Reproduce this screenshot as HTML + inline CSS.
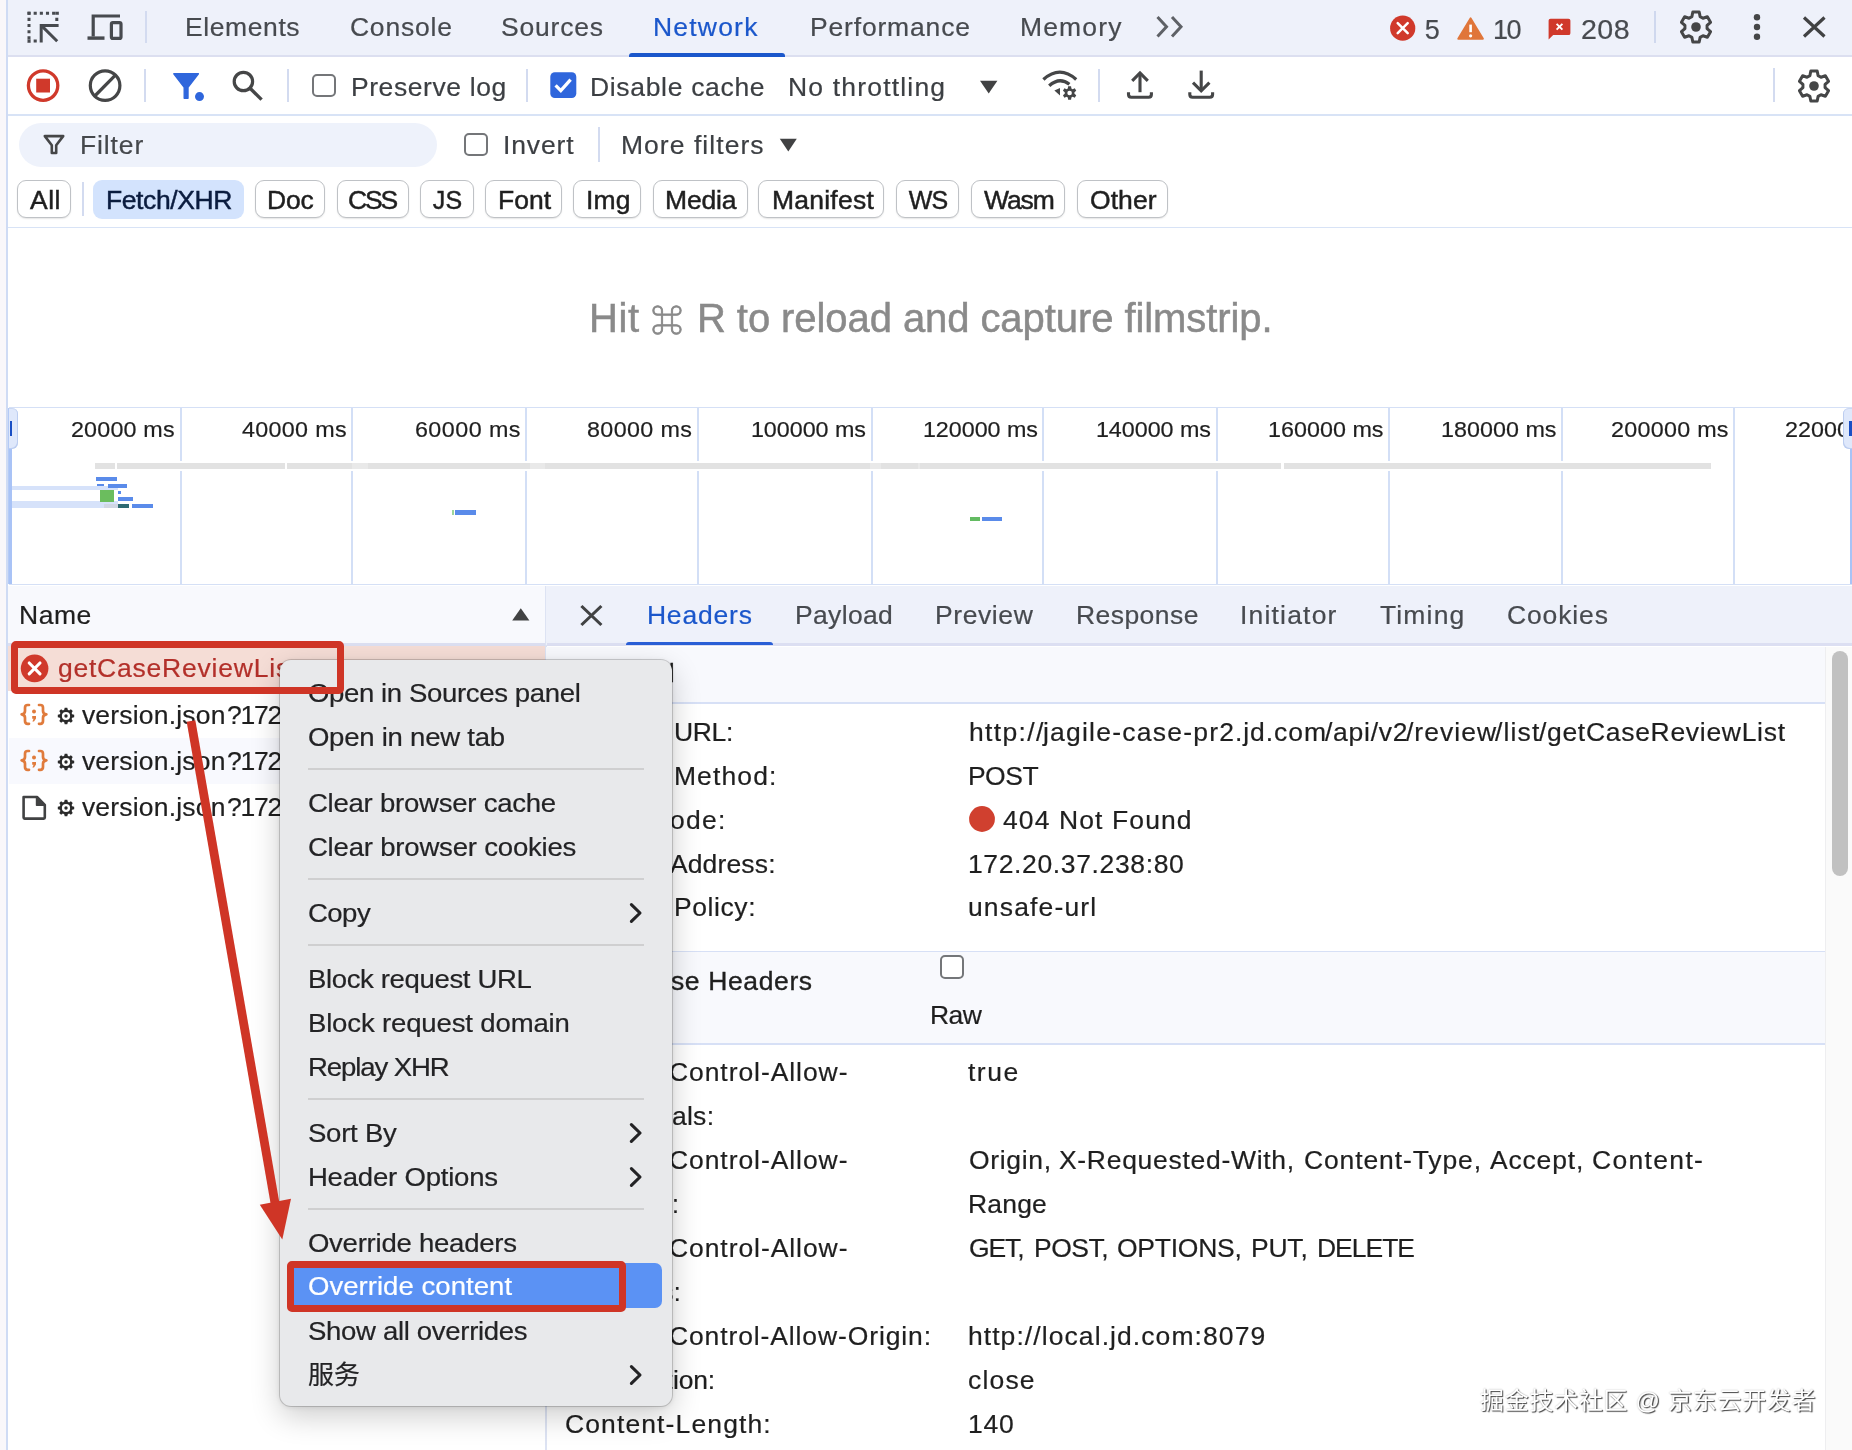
<!DOCTYPE html>
<html lang="en"><head><meta charset="utf-8"><title>DevTools Network - Override content</title>
<style>
html,body{margin:0;padding:0}
body{width:1852px;height:1450px;position:relative;overflow:hidden;background:#fff;font-family:"Liberation Sans","Noto Sans CJK SC",sans-serif;}
.a{position:absolute}
.t{position:absolute;white-space:nowrap;line-height:1;}
.L{position:absolute;left:0;top:0;width:1852px;height:1450px;will-change:transform;}
#menu{position:absolute;left:280px;top:660px;width:392px;height:745.6px;background:#e8e9eb;border-radius:11px;box-shadow:0 0 0 1px rgba(0,0,0,0.17),0 10px 30px rgba(0,0,0,0.2),0 1px 6px rgba(0,0,0,0.1);}
</style></head><body>
<div class="a" style="left:0px;top:0px;width:6.20px;height:1450.00px;background:#f9f7fa;"></div>
<div class="a" style="left:6.2px;top:0px;width:1.70px;height:1450.00px;background:#cfdbf4;"></div>
<div class="a" style="left:7.9px;top:0px;width:1844.10px;height:55.50px;background:#eef1fa;"></div>
<div class="a" style="left:7.9px;top:54.9px;width:1844.10px;height:2.10px;background:#dcdff0;"></div>
<div class="a" style="left:7.9px;top:114px;width:1844.10px;height:2.00px;background:#d8e3f6;"></div>
<div class="a" style="left:7.9px;top:226.6px;width:1844.10px;height:1.90px;background:#d8e3f6;"></div>
<svg class="a" style="left:26px;top:10px;" width="34" height="34" viewBox="0 0 34 34"><g fill="none" stroke="#474a4f" stroke-width="3">
<path d="M3 1.7 V33" stroke-dasharray="3.1 3.05"/><path d="M1.5 3.2 H33" stroke-dasharray="3.1 3.05"/>
<path d="M30.8 1.7 V12" stroke-dasharray="3.1 3.05"/><path d="M1.5 30.9 H12" stroke-dasharray="3.1 3.05"/>
<path d="M32.6 15.4 H15.2 V32.6" stroke-linejoin="miter"/><path d="M15.2 15.4 L31.2 31.2"/></g></svg>
<svg class="a" style="left:86px;top:12px;" width="38" height="30" viewBox="0 0 38 30"><g fill="none" stroke="#474a4f" stroke-width="3.2">
<path d="M7.2 24.5 V4 H34"/><rect x="25.4" y="10.6" width="9.6" height="15.8" rx="1.5"/></g>
<rect x="1.5" y="24.4" width="17" height="3.4" fill="#474a4f"/></svg>
<div class="a" style="left:145px;top:11px;width:2.00px;height:32.00px;background:#d3dbf0;"></div>
<div class="a" style="left:629px;top:53.4px;width:155.60px;height:3.60px;background:#1b57cb;border-radius:3px 3px 0 0;"></div>
<svg class="a" style="left:1154px;top:14px;" width="32" height="26" viewBox="0 0 32 26"><g fill="none" stroke="#5e6166" stroke-width="3" stroke-linejoin="miter"><path d="M3.5 3 L12.5 12.8 L3.5 22.6"/><path d="M18 3 L27 12.8 L18 22.6"/></g></svg>
<svg class="a" style="left:1389px;top:14px;" width="28" height="28" viewBox="0 0 28 28"><circle cx="13.7" cy="14.2" r="12.6" fill="#d0392b"/><path d="M8.7 9.2 L18.7 19.2 M18.7 9.2 L8.7 19.2" stroke="#fff" stroke-width="2.5" stroke-linecap="round"/></svg>
<svg class="a" style="left:1455px;top:14px;" width="32" height="28" viewBox="0 0 32 28"><path d="M15.6 4.2 L28 24.8 H3.2 Z" fill="#e0763a" stroke="#e0763a" stroke-width="1.8" stroke-linejoin="round"/><path d="M15.6 10.6 V18.2" stroke="#fff" stroke-width="2.6"/><circle cx="15.6" cy="21.8" r="1.6" fill="#fff"/></svg>
<svg class="a" style="left:1547px;top:17px;" width="26" height="25" viewBox="0 0 26 25"><path d="M3 1.7 H21.5 Q23.4 1.7 23.4 3.6 V16.2 Q23.4 18.1 21.5 18.1 H6.2 L1.6 22.6 V3.6 Q1.6 1.7 3.5 1.7 Z" fill="#d0392b"/><path d="M9.6 6.8 L15.4 12.6 M15.4 6.8 L9.6 12.6" stroke="#fff" stroke-width="1.9"/></svg>
<div class="a" style="left:1654px;top:10.5px;width:1.60px;height:32.50px;background:#cfd8ee;"></div>
<svg class="a" style="left:1679px;top:9.7px;" width="34" height="34" viewBox="0 0 34 34"><path d="M21.12 6.59 L20.18 2.03 L13.82 2.03 L12.88 6.59 L10.04 8.22 L5.63 6.76 L2.45 12.27 L5.92 15.36 L5.92 18.64 L2.45 21.73 L5.63 27.24 L10.04 25.78 L12.88 27.41 L13.82 31.97 L20.18 31.97 L21.12 27.41 L23.96 25.78 L28.37 27.24 L31.55 21.73 L28.08 18.64 L28.08 15.36 L31.55 12.27 L28.37 6.76 L23.96 8.22 Z" fill="none" stroke="#454647" stroke-width="3" stroke-linejoin="round"/><circle cx="17" cy="17" r="4.8" fill="#454647"/></svg>
<svg class="a" style="left:1750px;top:12px;" width="14" height="30" viewBox="0 0 14 30"><circle cx="7" cy="5.2" r="3.2" fill="#454647"/><circle cx="7" cy="15" r="3.2" fill="#454647"/><circle cx="7" cy="24.8" r="3.2" fill="#454647"/></svg>
<svg class="a" style="left:1800px;top:14px;" width="28" height="26" viewBox="0 0 28 26"><path d="M4 3.5 L24.5 22.5 M24.5 3.5 L4 22.5" stroke="#414243" stroke-width="3.2"/></svg>
<svg class="a" style="left:25px;top:68px;" width="36" height="36" viewBox="0 0 36 36"><circle cx="18.1" cy="17.6" r="14.7" fill="none" stroke="#d0392b" stroke-width="3.3"/><rect x="11.2" y="10.7" width="13.8" height="13.8" fill="#d0392b"/></svg>
<svg class="a" style="left:87px;top:68px;" width="36" height="36" viewBox="0 0 36 36"><circle cx="18.1" cy="17.6" r="14.8" fill="none" stroke="#454647" stroke-width="3.2"/><path d="M7.8 28 L28.4 7.2" stroke="#454647" stroke-width="3.2"/></svg>
<div class="a" style="left:144.4px;top:69px;width:1.80px;height:33.00px;background:#d3dbf0;"></div>
<svg class="a" style="left:170px;top:70px;" width="36" height="34" viewBox="0 0 36 34"><path d="M3.8 3.8 H28.4 L18 17.4 V28.3 H14.2 V17.4 Z" fill="#2f66dc" stroke="#2f66dc" stroke-width="1.4" stroke-linejoin="round"/><circle cx="29.5" cy="26.6" r="4.5" fill="#2f66dc"/></svg>
<svg class="a" style="left:230px;top:70px;" width="36" height="34" viewBox="0 0 36 34"><circle cx="13.4" cy="11.5" r="9.2" fill="none" stroke="#454647" stroke-width="3.2"/><path d="M19.8 18 L31.6 29.6" stroke="#454647" stroke-width="3.4"/></svg>
<div class="a" style="left:287.2px;top:69px;width:1.80px;height:33.00px;background:#d3dbf0;"></div>
<div class="a" style="left:312px;top:73.8px;width:20.0px;height:19.4px;border:2px solid #747679;border-radius:5px;background:#fff"></div>
<div class="a" style="left:526.2px;top:69px;width:1.80px;height:33.00px;background:#d3dbf0;"></div>
<svg class="a" style="left:550px;top:72px;" width="27" height="27" viewBox="0 0 27 27"><rect x="0.3" y="0.3" width="26" height="25.8" rx="4.5" fill="#2f66dc"/><path d="M5.6 13.4 L10.8 18.6 L20.6 7.6" fill="none" stroke="#fff" stroke-width="3.3"/></svg>
<svg class="a" style="left:979px;top:80px;" width="20" height="15" viewBox="0 0 20 15"><path d="M1 0.7 H18.4 L9.7 13.6 Z" fill="#414243"/></svg>
<svg class="a" style="left:1039px;top:68px;" width="42" height="34" viewBox="0 0 42 34"><g fill="none" stroke="#454647" stroke-width="3.3">
<path d="M4.4 11.4 Q20.8 -3.2 37.2 11.4"/><path d="M10.2 17.8 Q20.4 8.6 30.4 16.2"/></g>
<path d="M15.4 22.4 L21 20 L21 27.6 Z" fill="#454647"/>
<path d="M32.40 20.44 L32.06 18.15 L29.14 18.15 L28.80 20.44 L27.56 21.16 L25.40 20.32 L23.94 22.84 L25.75 24.28 L25.75 25.72 L23.94 27.16 L25.40 29.68 L27.56 28.84 L28.80 29.56 L29.14 31.85 L32.06 31.85 L32.40 29.56 L33.64 28.84 L35.80 29.68 L37.26 27.16 L35.45 25.72 L35.45 24.28 L37.26 22.84 L35.80 20.32 L33.64 21.16 Z" fill="#454647"/><circle cx="30.6" cy="25" r="2.3" fill="#fff"/></svg>
<div class="a" style="left:1098.2px;top:69px;width:1.80px;height:33.00px;background:#d3dbf0;"></div>
<svg class="a" style="left:1124px;top:69px;" width="32" height="32" viewBox="0 0 32 32"><g fill="none" stroke="#454647" stroke-width="3.1"><path d="M16 23.2 V4.4"/><path d="M8.2 11.8 L16 4 L23.8 11.8"/><path d="M4.5 23.2 V25.6 Q4.5 28.3 7.2 28.3 H24.7 Q27.4 28.3 27.4 25.6 V23.2"/></g></svg>
<svg class="a" style="left:1185px;top:69px;" width="32" height="32" viewBox="0 0 32 32"><g fill="none" stroke="#454647" stroke-width="3.1"><path d="M16.2 1.6 V21.4"/><path d="M8 13.6 L16.2 21.8 L24.4 13.6"/><path d="M4.8 23.2 V25.6 Q4.8 28.3 7.5 28.3 H24.9 Q27.6 28.3 27.6 25.6 V23.2"/></g></svg>
<div class="a" style="left:1773.2px;top:68px;width:1.80px;height:34.00px;background:#d3dbf0;"></div>
<svg class="a" style="left:1797px;top:69px;" width="34" height="34" viewBox="0 0 34 34"><path d="M21.12 6.59 L20.18 2.03 L13.82 2.03 L12.88 6.59 L10.04 8.22 L5.63 6.76 L2.45 12.27 L5.92 15.36 L5.92 18.64 L2.45 21.73 L5.63 27.24 L10.04 25.78 L12.88 27.41 L13.82 31.97 L20.18 31.97 L21.12 27.41 L23.96 25.78 L28.37 27.24 L31.55 21.73 L28.08 18.64 L28.08 15.36 L31.55 12.27 L28.37 6.76 L23.96 8.22 Z" fill="none" stroke="#454647" stroke-width="3" stroke-linejoin="round"/><circle cx="17" cy="17" r="4.8" fill="#454647"/></svg>
<div class="a" style="left:18.8px;top:123px;width:418.00px;height:43.80px;background:#eef2fb;border-radius:22px;"></div>
<svg class="a" style="left:42px;top:133px;" width="24" height="23" viewBox="0 0 24 23"><path d="M2.8 3.1 H21.2 L14.2 12.2 V20 H9.8 V12.2 Z" fill="none" stroke="#454647" stroke-width="2.6" stroke-linejoin="round"/></svg>
<div class="a" style="left:464px;top:132.5px;width:20.2px;height:19.5px;border:2px solid #747679;border-radius:5px;background:#fff"></div>
<div class="a" style="left:598.2px;top:127px;width:1.80px;height:35.00px;background:#d3dbf0;"></div>
<svg class="a" style="left:779px;top:138px;" width="20" height="15" viewBox="0 0 20 15"><path d="M0.8 0.8 H17.8 L9.3 13.6 Z" fill="#414243"/></svg>
<div class="a" style="left:17.2px;top:179.7px;width:51.7px;height:36.6px;border:1.5px solid #bfc2c6;border-radius:9px;background:#fff;box-shadow:0 1px 1.5px rgba(0,0,0,0.10)"></div>
<div class="a" style="left:255px;top:179.7px;width:67.6px;height:36.6px;border:1.5px solid #bfc2c6;border-radius:9px;background:#fff;box-shadow:0 1px 1.5px rgba(0,0,0,0.10)"></div>
<div class="a" style="left:337px;top:179.7px;width:69.8px;height:36.6px;border:1.5px solid #bfc2c6;border-radius:9px;background:#fff;box-shadow:0 1px 1.5px rgba(0,0,0,0.10)"></div>
<div class="a" style="left:420px;top:179.7px;width:51.6px;height:36.6px;border:1.5px solid #bfc2c6;border-radius:9px;background:#fff;box-shadow:0 1px 1.5px rgba(0,0,0,0.10)"></div>
<div class="a" style="left:485.3px;top:179.7px;width:74.7px;height:36.6px;border:1.5px solid #bfc2c6;border-radius:9px;background:#fff;box-shadow:0 1px 1.5px rgba(0,0,0,0.10)"></div>
<div class="a" style="left:573.4px;top:179.7px;width:65.3px;height:36.6px;border:1.5px solid #bfc2c6;border-radius:9px;background:#fff;box-shadow:0 1px 1.5px rgba(0,0,0,0.10)"></div>
<div class="a" style="left:652.7px;top:179.7px;width:93.5px;height:36.6px;border:1.5px solid #bfc2c6;border-radius:9px;background:#fff;box-shadow:0 1px 1.5px rgba(0,0,0,0.10)"></div>
<div class="a" style="left:758.2px;top:179.7px;width:124.2px;height:36.6px;border:1.5px solid #bfc2c6;border-radius:9px;background:#fff;box-shadow:0 1px 1.5px rgba(0,0,0,0.10)"></div>
<div class="a" style="left:895.8px;top:179.7px;width:61.2px;height:36.6px;border:1.5px solid #bfc2c6;border-radius:9px;background:#fff;box-shadow:0 1px 1.5px rgba(0,0,0,0.10)"></div>
<div class="a" style="left:970.8px;top:179.7px;width:92.7px;height:36.6px;border:1.5px solid #bfc2c6;border-radius:9px;background:#fff;box-shadow:0 1px 1.5px rgba(0,0,0,0.10)"></div>
<div class="a" style="left:1077.2px;top:179.7px;width:88.4px;height:36.6px;border:1.5px solid #bfc2c6;border-radius:9px;background:#fff;box-shadow:0 1px 1.5px rgba(0,0,0,0.10)"></div>
<div class="a" style="left:82.2px;top:182px;width:1.80px;height:34.00px;background:#d3dbf0;"></div>
<div class="a" style="left:93.3px;top:179.7px;width:150.70px;height:39.60px;background:#d3e3fd;border-radius:9px;"></div>
<div class="a" style="left:8.5px;top:406.5px;width:1843.50px;height:1.70px;background:#d5e0f6;"></div>
<div class="a" style="left:8.5px;top:583.8px;width:1843.50px;height:1.70px;background:#d5e0f6;"></div>
<div class="a" style="left:180px;top:408px;width:2.00px;height:176.00px;background:#d3dff6;"></div>
<div class="a" style="left:351.2px;top:408px;width:2.00px;height:176.00px;background:#d3dff6;"></div>
<div class="a" style="left:525px;top:408px;width:2.00px;height:176.00px;background:#d3dff6;"></div>
<div class="a" style="left:697.2px;top:408px;width:2.00px;height:176.00px;background:#d3dff6;"></div>
<div class="a" style="left:870.5px;top:408px;width:2.00px;height:176.00px;background:#d3dff6;"></div>
<div class="a" style="left:1042.2px;top:408px;width:2.00px;height:176.00px;background:#d3dff6;"></div>
<div class="a" style="left:1215.5px;top:408px;width:2.00px;height:176.00px;background:#d3dff6;"></div>
<div class="a" style="left:1388.2px;top:408px;width:2.00px;height:176.00px;background:#d3dff6;"></div>
<div class="a" style="left:1561.2px;top:408px;width:2.00px;height:176.00px;background:#d3dff6;"></div>
<div class="a" style="left:1733px;top:408px;width:2.00px;height:176.00px;background:#d3dff6;"></div>
<div class="a" style="left:90px;top:461.3px;width:1626.00px;height:10.00px;background:#fff;"></div>
<div class="a" style="left:94.6px;top:463.4px;width:20.60px;height:5.20px;background:#e2e2e2;"></div>
<div class="a" style="left:116.6px;top:463.4px;width:168.00px;height:5.20px;background:#e2e2e2;"></div>
<div class="a" style="left:286.6px;top:463.4px;width:994.40px;height:5.20px;background:#e2e2e2;"></div>
<div class="a" style="left:1283.5px;top:463.4px;width:427.50px;height:5.20px;background:#e2e2e2;"></div>
<div class="a" style="left:352px;top:463.4px;width:15.50px;height:5.20px;background:#e9e9e9;"></div>
<div class="a" style="left:530px;top:463.4px;width:15.00px;height:5.20px;background:#e9e9e9;"></div>
<div class="a" style="left:870px;top:463.4px;width:11.00px;height:5.20px;background:#e9e9e9;"></div>
<div class="a" style="left:918px;top:463.4px;width:2.00px;height:5.20px;background:#e9e9e9;"></div>
<div class="a" style="left:12px;top:486px;width:105.70px;height:4.30px;background:#d6e2fa;"></div>
<div class="a" style="left:12px;top:501px;width:105.70px;height:7.00px;background:#d6e2fa;"></div>
<div class="a" style="left:96px;top:477px;width:20.60px;height:3.60px;background:#5a8bea;"></div>
<div class="a" style="left:97px;top:483.8px;width:7.00px;height:1.90px;background:#5a8bea;"></div>
<div class="a" style="left:107.6px;top:483.8px;width:19.80px;height:4.20px;background:#5a8bea;"></div>
<div class="a" style="left:100px;top:490px;width:14.00px;height:11.50px;background:#6bbd5e;"></div>
<div class="a" style="left:118px;top:491px;width:3.40px;height:3.40px;background:#5a8bea;"></div>
<div class="a" style="left:118px;top:497px;width:14.80px;height:3.90px;background:#5a8bea;"></div>
<div class="a" style="left:104px;top:504px;width:14.00px;height:3.60px;background:#d0d6e4;"></div>
<div class="a" style="left:118px;top:504px;width:11.00px;height:3.60px;background:#2e6b73;"></div>
<div class="a" style="left:132px;top:504px;width:20.70px;height:3.60px;background:#5a8bea;"></div>
<div class="a" style="left:451.5px;top:510px;width:2.00px;height:4.50px;background:#9fd69a;"></div>
<div class="a" style="left:454.5px;top:510px;width:21.00px;height:4.50px;background:#5a8bea;"></div>
<div class="a" style="left:969.5px;top:516.5px;width:10.00px;height:4.50px;background:#63bb62;"></div>
<div class="a" style="left:981.5px;top:516.5px;width:20.00px;height:4.50px;background:#5a8bea;"></div>
<div class="a" style="left:7.9px;top:408px;width:4.10px;height:176.00px;background:#b4caf6;"></div>
<div class="a" style="left:9.4px;top:408px;width:2.60px;height:176.00px;background:#a9c3f6;"></div>
<div class="a" style="left:8.5px;top:408px;width:9.90px;height:41.00px;background:#dfe8fb;border-radius:0 6px 6px 0;box-shadow:inset -1px -1px 0 #bccdf0, inset 0 1px 0 #cbd8f3;"></div>
<div class="a" style="left:10.2px;top:421px;width:2.00px;height:15.40px;background:#1a4fc4;"></div>
<div class="a" style="left:1850px;top:408px;width:2.00px;height:176.00px;background:#a9c3f6;"></div>
<div class="a" style="left:7.9px;top:585.5px;width:537.10px;height:57.50px;background:#f8f9fd;"></div>
<div class="a" style="left:7.9px;top:643px;width:537.10px;height:2.80px;background:#dcdff1;"></div>
<svg class="a" style="left:511px;top:607px;" width="20" height="15" viewBox="0 0 20 15"><path d="M1.2 13.6 H18.4 L9.8 1.2 Z" fill="#414243"/></svg>
<div class="a" style="left:7.9px;top:645.8px;width:537.10px;height:45.20px;background:#f5ddd6;"></div>
<div class="a" style="left:8.5px;top:737.5px;width:536.00px;height:46.00px;background:#f8f9fe;"></div>
<svg class="a" style="left:20px;top:654px;" width="30" height="30" viewBox="0 0 30 30"><circle cx="14.6" cy="14.4" r="13.8" fill="#d0392b"/><path d="M9.2 9 L20 19.8 M20 9 L9.2 19.8" stroke="#fff" stroke-width="3.1" stroke-linecap="round"/></svg>
<svg class="a" style="left:19px;top:703px;" width="30" height="24" viewBox="0 0 30 24"><g fill="none" stroke="#e07b3c" stroke-width="2.7" stroke-linejoin="round" stroke-linecap="round">
<path d="M10 2 H8.6 Q6 2 6 4.8 V8 Q6 11 2.6 11.4 Q6 11.8 6 14.8 V18 Q6 20.8 8.6 20.8 H10"/>
<path d="M20 2 H21.4 Q24 2 24 4.8 V8 Q24 11 27.4 11.4 Q24 11.8 24 14.8 V18 Q24 20.8 21.4 20.8 H20"/></g>
<circle cx="15" cy="8.4" r="2" fill="#e07b3c"/><path d="M13.2 13 H17 V15.6 L15 18.6 H13.4 L14.6 15.8 H13.2 Z" fill="#e07b3c"/></svg>
<svg class="a" style="left:57px;top:707.2px;" width="18" height="18" viewBox="0 0 18 18"><path d="M10.79 2.85 L10.30 0.80 L7.70 0.80 L7.21 2.85 L5.92 3.39 L4.12 2.29 L2.29 4.12 L3.39 5.92 L2.85 7.21 L0.80 7.70 L0.80 10.30 L2.85 10.79 L3.39 12.08 L2.29 13.88 L4.12 15.71 L5.92 14.61 L7.21 15.15 L7.70 17.20 L10.30 17.20 L10.79 15.15 L12.08 14.61 L13.88 15.71 L15.71 13.88 L14.61 12.08 L15.15 10.79 L17.20 10.30 L17.20 7.70 L15.15 7.21 L14.61 5.92 L15.71 4.12 L13.88 2.29 L12.08 3.39 Z" fill="#2a2a2a"/><circle cx="9" cy="9" r="4.1" fill="#fff"/><circle cx="9" cy="9" r="1.7" fill="#2a2a2a"/></svg>
<svg class="a" style="left:19px;top:749px;" width="30" height="24" viewBox="0 0 30 24"><g fill="none" stroke="#e07b3c" stroke-width="2.7" stroke-linejoin="round" stroke-linecap="round">
<path d="M10 2 H8.6 Q6 2 6 4.8 V8 Q6 11 2.6 11.4 Q6 11.8 6 14.8 V18 Q6 20.8 8.6 20.8 H10"/>
<path d="M20 2 H21.4 Q24 2 24 4.8 V8 Q24 11 27.4 11.4 Q24 11.8 24 14.8 V18 Q24 20.8 21.4 20.8 H20"/></g>
<circle cx="15" cy="8.4" r="2" fill="#e07b3c"/><path d="M13.2 13 H17 V15.6 L15 18.6 H13.4 L14.6 15.8 H13.2 Z" fill="#e07b3c"/></svg>
<svg class="a" style="left:57px;top:753.2px;" width="18" height="18" viewBox="0 0 18 18"><path d="M10.79 2.85 L10.30 0.80 L7.70 0.80 L7.21 2.85 L5.92 3.39 L4.12 2.29 L2.29 4.12 L3.39 5.92 L2.85 7.21 L0.80 7.70 L0.80 10.30 L2.85 10.79 L3.39 12.08 L2.29 13.88 L4.12 15.71 L5.92 14.61 L7.21 15.15 L7.70 17.20 L10.30 17.20 L10.79 15.15 L12.08 14.61 L13.88 15.71 L15.71 13.88 L14.61 12.08 L15.15 10.79 L17.20 10.30 L17.20 7.70 L15.15 7.21 L14.61 5.92 L15.71 4.12 L13.88 2.29 L12.08 3.39 Z" fill="#2a2a2a"/><circle cx="9" cy="9" r="4.1" fill="#fff"/><circle cx="9" cy="9" r="1.7" fill="#2a2a2a"/></svg>
<svg class="a" style="left:20px;top:794px;" width="30" height="28" viewBox="0 0 30 28"><path d="M3.6 3 H17 L24.8 10.8 V23.6 Q24.8 24.6 23.8 24.6 H4.6 Q3.6 24.6 3.6 23.6 Z" fill="none" stroke="#414243" stroke-width="2.6" stroke-linejoin="round"/><path d="M16.6 3.2 V11.2 H24.6 Z" fill="#414243" stroke="#414243" stroke-width="1.6" stroke-linejoin="round"/></svg>
<svg class="a" style="left:57px;top:799.2px;" width="18" height="18" viewBox="0 0 18 18"><path d="M10.79 2.85 L10.30 0.80 L7.70 0.80 L7.21 2.85 L5.92 3.39 L4.12 2.29 L2.29 4.12 L3.39 5.92 L2.85 7.21 L0.80 7.70 L0.80 10.30 L2.85 10.79 L3.39 12.08 L2.29 13.88 L4.12 15.71 L5.92 14.61 L7.21 15.15 L7.70 17.20 L10.30 17.20 L10.79 15.15 L12.08 14.61 L13.88 15.71 L15.71 13.88 L14.61 12.08 L15.15 10.79 L17.20 10.30 L17.20 7.70 L15.15 7.21 L14.61 5.92 L15.71 4.12 L13.88 2.29 L12.08 3.39 Z" fill="#2a2a2a"/><circle cx="9" cy="9" r="4.1" fill="#fff"/><circle cx="9" cy="9" r="1.7" fill="#2a2a2a"/></svg>
<div class="a" style="left:545px;top:585.5px;width:1.80px;height:864.50px;background:#dde3f3;"></div>
<div class="a" style="left:546.4px;top:585.5px;width:1305.60px;height:59.50px;background:#eef1fa;"></div>
<div class="a" style="left:546.8px;top:643.2px;width:1305.20px;height:2.80px;background:#dcdff2;"></div>
<svg class="a" style="left:578px;top:603px;" width="28" height="26" viewBox="0 0 28 26"><path d="M3.4 3 L23.4 22 M23.4 3 L3.4 22" stroke="#414243" stroke-width="3.1"/></svg>
<div class="a" style="left:626.2px;top:642px;width:146.80px;height:3.40px;background:#2a5fd6;border-radius:3px 3px 0 0;"></div>
<div class="a" style="left:546.4px;top:646.6px;width:1278.60px;height:55.40px;background:#f8f9fd;"></div>
<div class="a" style="left:546.4px;top:702px;width:1278.60px;height:1.50px;background:#d7e0f6;"></div>
<div class="a" style="left:546.4px;top:950.6px;width:1278.60px;height:1.50px;background:#d7e0f6;"></div>
<div class="a" style="left:546.4px;top:952.1px;width:1278.60px;height:90.90px;background:#f8f9fd;"></div>
<div class="a" style="left:546.4px;top:1043px;width:1278.60px;height:1.50px;background:#d7e0f6;"></div>
<div class="a" style="left:1825px;top:646.6px;width:27.00px;height:803.40px;background:#fafafa;"></div>
<div class="a" style="left:1824.6px;top:646.6px;width:1.40px;height:803.40px;background:#eeeef0;"></div>
<div class="a" style="left:1831.7px;top:651px;width:16.30px;height:225.00px;background:#c1c1c1;border-radius:8.2px;"></div>
<svg class="a" style="left:968px;top:805px;" width="28" height="28" viewBox="0 0 28 28"><circle cx="14" cy="14" r="12.9" fill="#d0402f"/></svg>
<div class="a" style="left:940.2px;top:955.4px;width:19.6px;height:19.4px;border:2px solid #747679;border-radius:5px;background:#fff"></div>
<div class="L"><span class="t" style="left:184.55px;top:15px;font-size:25px;letter-spacing:0.568px;color:#474a4f;-webkit-text-stroke:0.2px #474a4f;transform:scaleX(1.06);transform-origin:1.25px 0;">Elements</span>
<span class="t" style="left:349.55px;top:15px;font-size:25px;letter-spacing:0.762px;color:#474a4f;-webkit-text-stroke:0.2px #474a4f;transform:scaleX(1.06);transform-origin:1.25px 0;">Console</span>
<span class="t" style="left:501.15px;top:15px;font-size:25px;letter-spacing:0.765px;color:#474a4f;-webkit-text-stroke:0.2px #474a4f;transform:scaleX(1.06);transform-origin:1.25px 0;">Sources</span>
<span class="t" style="left:809.55px;top:15px;font-size:25px;letter-spacing:0.790px;color:#474a4f;-webkit-text-stroke:0.2px #474a4f;transform:scaleX(1.06);transform-origin:1.25px 0;">Performance</span>
<span class="t" style="left:1020.45px;top:15px;font-size:25px;letter-spacing:1.089px;color:#474a4f;-webkit-text-stroke:0.2px #474a4f;transform:scaleX(1.06);transform-origin:1.25px 0;">Memory</span>
<span class="t" style="left:653.15px;top:15px;font-size:25px;letter-spacing:1.147px;color:#1b57cb;-webkit-text-stroke:0.2px #1b57cb;transform:scaleX(1.06);transform-origin:1.25px 0;">Network</span>
<span class="t" style="left:1424.65px;top:17px;font-size:27px;letter-spacing:1.199px;color:#474a4f;-webkit-text-stroke:0.2px #474a4f;">5</span>
<span class="t" style="left:1493.05px;top:17px;font-size:27px;letter-spacing:-1.617px;color:#474a4f;-webkit-text-stroke:0.2px #474a4f;">10</span>
<span class="t" style="left:1580.65px;top:17px;font-size:27px;letter-spacing:0.476px;color:#474a4f;-webkit-text-stroke:0.2px #474a4f;transform:scaleX(1.06);transform-origin:1.35px 0;">208</span>
<span class="t" style="left:351.15px;top:75px;font-size:25px;letter-spacing:0.558px;color:#3c3f43;-webkit-text-stroke:0.2px #3c3f43;transform:scaleX(1.06);transform-origin:1.25px 0;">Preserve log</span>
<span class="t" style="left:589.85px;top:75px;font-size:25px;letter-spacing:0.647px;color:#3c3f43;-webkit-text-stroke:0.2px #3c3f43;transform:scaleX(1.06);transform-origin:1.25px 0;">Disable cache</span>
<span class="t" style="left:787.75px;top:75px;font-size:25px;letter-spacing:1.124px;color:#3c3f43;-webkit-text-stroke:0.2px #3c3f43;transform:scaleX(1.06);transform-origin:1.25px 0;">No throttling</span>
<span class="t" style="left:80.35px;top:133px;font-size:25px;letter-spacing:0.828px;color:#45484c;-webkit-text-stroke:0.2px #45484c;transform:scaleX(1.06);transform-origin:1.25px 0;">Filter</span>
<span class="t" style="left:503.15px;top:133px;font-size:25px;letter-spacing:0.831px;color:#3c3f43;-webkit-text-stroke:0.2px #3c3f43;transform:scaleX(1.06);transform-origin:1.25px 0;">Invert</span>
<span class="t" style="left:621.05px;top:133px;font-size:25px;letter-spacing:0.997px;color:#3c3f43;-webkit-text-stroke:0.2px #3c3f43;transform:scaleX(1.06);transform-origin:1.25px 0;">More filters</span>
<span class="t" style="left:29.55px;top:188px;font-size:25px;letter-spacing:0.528px;color:#1f1f1f;-webkit-text-stroke:0.45px #1f1f1f;transform:scaleX(1.06);transform-origin:1.25px 0;">All</span>
<span class="t" style="left:266.95px;top:188px;font-size:25px;letter-spacing:-0.166px;color:#1f1f1f;-webkit-text-stroke:0.45px #1f1f1f;transform:scaleX(1.06);transform-origin:1.25px 0;">Doc</span>
<span class="t" style="left:347.95px;top:188px;font-size:25px;letter-spacing:-2.031px;color:#1f1f1f;-webkit-text-stroke:0.45px #1f1f1f;transform:scaleX(1.06);transform-origin:1.25px 0;">CSS</span>
<span class="t" style="left:432.75px;top:188px;font-size:25px;letter-spacing:0.363px;color:#1f1f1f;-webkit-text-stroke:0.45px #1f1f1f;">JS</span>
<span class="t" style="left:497.65px;top:188px;font-size:25px;letter-spacing:0.048px;color:#1f1f1f;-webkit-text-stroke:0.45px #1f1f1f;transform:scaleX(1.06);transform-origin:1.25px 0;">Font</span>
<span class="t" style="left:585.55px;top:188px;font-size:25px;letter-spacing:0.187px;color:#1f1f1f;-webkit-text-stroke:0.45px #1f1f1f;transform:scaleX(1.06);transform-origin:1.25px 0;">Img</span>
<span class="t" style="left:664.85px;top:188px;font-size:25px;letter-spacing:-0.117px;color:#1f1f1f;-webkit-text-stroke:0.45px #1f1f1f;transform:scaleX(1.06);transform-origin:1.25px 0;">Media</span>
<span class="t" style="left:771.65px;top:188px;font-size:25px;letter-spacing:0.233px;color:#1f1f1f;-webkit-text-stroke:0.45px #1f1f1f;transform:scaleX(1.06);transform-origin:1.25px 0;">Manifest</span>
<span class="t" style="left:908.65px;top:188px;font-size:25px;letter-spacing:-0.631px;color:#1f1f1f;-webkit-text-stroke:0.45px #1f1f1f;">WS</span>
<span class="t" style="left:983.95px;top:188px;font-size:25px;letter-spacing:-0.980px;color:#1f1f1f;-webkit-text-stroke:0.45px #1f1f1f;transform:scaleX(1.06);transform-origin:1.25px 0;">Wasm</span>
<span class="t" style="left:1090.05px;top:188px;font-size:25px;letter-spacing:0.095px;color:#1f1f1f;-webkit-text-stroke:0.45px #1f1f1f;transform:scaleX(1.06);transform-origin:1.25px 0;">Other</span>
<span class="t" style="left:105.65px;top:188px;font-size:25px;letter-spacing:-0.368px;color:#0b1c3f;-webkit-text-stroke:0.45px #0b1c3f;transform:scaleX(1.06);transform-origin:1.25px 0;">Fetch/XHR</span>
<span><span class="t" style="left:589.00px;top:298px;font-size:40px;letter-spacing:0.605px;color:#8a8a8a;-webkit-text-stroke:0.5px #8a8a8a;font-family:"Liberation Sans","DejaVu Sans",sans-serif;">Hit </span><span class="t" style="left:650.90px;top:305px;font-size:32px;letter-spacing:0.000px;color:#8a8a8a;-webkit-text-stroke:0.9px #8a8a8a;font-family:"Liberation Sans","DejaVu Sans",sans-serif;">⌘ </span><span class="t" style="left:697.00px;top:298px;font-size:40px;letter-spacing:-0.074px;color:#8a8a8a;-webkit-text-stroke:0.5px #8a8a8a;font-family:"Liberation Sans","DejaVu Sans",sans-serif;">R to reload and capture filmstrip.</span></span>
<span class="t" style="left:71.30px;top:419px;font-size:22px;letter-spacing:0.172px;color:#1f1f1f;-webkit-text-stroke:0.2px #1f1f1f;transform:scaleX(1.06);transform-origin:1.10px 0;">20000 ms</span>
<span class="t" style="left:241.90px;top:419px;font-size:22px;letter-spacing:0.307px;color:#1f1f1f;-webkit-text-stroke:0.2px #1f1f1f;transform:scaleX(1.06);transform-origin:1.10px 0;">40000 ms</span>
<span class="t" style="left:415.40px;top:419px;font-size:22px;letter-spacing:0.428px;color:#1f1f1f;-webkit-text-stroke:0.2px #1f1f1f;transform:scaleX(1.06);transform-origin:1.10px 0;">60000 ms</span>
<span class="t" style="left:587.40px;top:419px;font-size:22px;letter-spacing:0.361px;color:#1f1f1f;-webkit-text-stroke:0.2px #1f1f1f;transform:scaleX(1.06);transform-origin:1.10px 0;">80000 ms</span>
<span class="t" style="left:750.90px;top:419px;font-size:22px;letter-spacing:-0.034px;color:#1f1f1f;-webkit-text-stroke:0.2px #1f1f1f;transform:scaleX(1.06);transform-origin:1.10px 0;">100000 ms</span>
<span class="t" style="left:922.90px;top:419px;font-size:22px;letter-spacing:-0.034px;color:#1f1f1f;-webkit-text-stroke:0.2px #1f1f1f;transform:scaleX(1.06);transform-origin:1.10px 0;">120000 ms</span>
<span class="t" style="left:1096.40px;top:419px;font-size:22px;letter-spacing:-0.034px;color:#1f1f1f;-webkit-text-stroke:0.2px #1f1f1f;transform:scaleX(1.06);transform-origin:1.10px 0;">140000 ms</span>
<span class="t" style="left:1267.90px;top:419px;font-size:22px;letter-spacing:0.025px;color:#1f1f1f;-webkit-text-stroke:0.2px #1f1f1f;transform:scaleX(1.06);transform-origin:1.10px 0;">160000 ms</span>
<span class="t" style="left:1441.40px;top:419px;font-size:22px;letter-spacing:0.025px;color:#1f1f1f;-webkit-text-stroke:0.2px #1f1f1f;transform:scaleX(1.06);transform-origin:1.10px 0;">180000 ms</span>
<span class="t" style="left:1610.90px;top:419px;font-size:22px;letter-spacing:0.260px;color:#1f1f1f;-webkit-text-stroke:0.2px #1f1f1f;transform:scaleX(1.06);transform-origin:1.10px 0;">200000 ms</span>
<span class="t" style="left:1785.40px;top:419px;font-size:22px;letter-spacing:0.025px;color:#1f1f1f;-webkit-text-stroke:0.2px #1f1f1f;transform:scaleX(1.06);transform-origin:1.10px 0;">220000 ms</span>
<span class="t" style="left:18.75px;top:603px;font-size:25px;letter-spacing:0.533px;color:#1f1f1f;-webkit-text-stroke:0.2px #1f1f1f;transform:scaleX(1.06);transform-origin:1.25px 0;">Name</span>
<span class="t" style="left:58.05px;top:656px;font-size:25px;letter-spacing:0.740px;color:#b3302a;-webkit-text-stroke:0.2px #b3302a;transform:scaleX(1.06);transform-origin:1.25px 0;">getCaseReviewList</span>
<span><span class="t" style="left:81.95px;top:703px;font-size:25px;letter-spacing:0.178px;color:#1f1f1f;-webkit-text-stroke:0.2px #1f1f1f;transform:scaleX(1.06);transform-origin:1.25px 0;">version.json</span><span class="t" style="left:227.35px;top:703px;font-size:25px;letter-spacing:-1.160px;color:#1f1f1f;-webkit-text-stroke:0.2px #1f1f1f;transform:scaleX(1.06);transform-origin:1.25px 0;">?1725</span></span>
<span><span class="t" style="left:81.95px;top:749px;font-size:25px;letter-spacing:0.178px;color:#1f1f1f;-webkit-text-stroke:0.2px #1f1f1f;transform:scaleX(1.06);transform-origin:1.25px 0;">version.json</span><span class="t" style="left:227.35px;top:749px;font-size:25px;letter-spacing:-1.160px;color:#1f1f1f;-webkit-text-stroke:0.2px #1f1f1f;transform:scaleX(1.06);transform-origin:1.25px 0;">?1725</span></span>
<span><span class="t" style="left:81.95px;top:795px;font-size:25px;letter-spacing:0.178px;color:#1f1f1f;-webkit-text-stroke:0.2px #1f1f1f;transform:scaleX(1.06);transform-origin:1.25px 0;">version.json</span><span class="t" style="left:227.35px;top:795px;font-size:25px;letter-spacing:-1.160px;color:#1f1f1f;-webkit-text-stroke:0.2px #1f1f1f;transform:scaleX(1.06);transform-origin:1.25px 0;">?1725</span></span>
<span class="t" style="left:646.65px;top:603px;font-size:25px;letter-spacing:0.757px;color:#1b57cb;-webkit-text-stroke:0.2px #1b57cb;transform:scaleX(1.06);transform-origin:1.25px 0;">Headers</span>
<span class="t" style="left:794.55px;top:603px;font-size:25px;letter-spacing:0.331px;color:#474a4f;-webkit-text-stroke:0.2px #474a4f;transform:scaleX(1.06);transform-origin:1.25px 0;">Payload</span>
<span class="t" style="left:935.35px;top:603px;font-size:25px;letter-spacing:0.570px;color:#474a4f;-webkit-text-stroke:0.2px #474a4f;transform:scaleX(1.06);transform-origin:1.25px 0;">Preview</span>
<span class="t" style="left:1076.05px;top:603px;font-size:25px;letter-spacing:0.425px;color:#474a4f;-webkit-text-stroke:0.2px #474a4f;transform:scaleX(1.06);transform-origin:1.25px 0;">Response</span>
<span class="t" style="left:1240.35px;top:603px;font-size:25px;letter-spacing:1.130px;color:#474a4f;-webkit-text-stroke:0.2px #474a4f;transform:scaleX(1.06);transform-origin:1.25px 0;">Initiator</span>
<span class="t" style="left:1379.75px;top:603px;font-size:25px;letter-spacing:1.103px;color:#474a4f;-webkit-text-stroke:0.2px #474a4f;transform:scaleX(1.06);transform-origin:1.25px 0;">Timing</span>
<span class="t" style="left:1506.75px;top:603px;font-size:25px;letter-spacing:0.823px;color:#474a4f;-webkit-text-stroke:0.2px #474a4f;transform:scaleX(1.06);transform-origin:1.25px 0;">Cookies</span>
<span><span class="t" style="left:564.75px;top:661px;font-size:25px;letter-spacing:-1.633px;color:#1f1f1f;-webkit-text-stroke:0.35px #1f1f1f;">▼ Genera</span><span class="t" style="left:668.95px;top:661px;font-size:25px;letter-spacing:-0.113px;color:#1f1f1f;-webkit-text-stroke:0.35px #1f1f1f;">l</span></span>
<span><span class="t" style="left:564.75px;top:720px;font-size:25px;letter-spacing:0.719px;color:#1f1f1f;-webkit-text-stroke:0.2px #1f1f1f;transform:scaleX(1.06);transform-origin:1.25px 0;">Request </span><span class="t" style="left:674.15px;top:720px;font-size:25px;letter-spacing:-0.284px;color:#1f1f1f;-webkit-text-stroke:0.2px #1f1f1f;transform:scaleX(1.06);transform-origin:1.25px 0;">URL:</span></span>
<span><span class="t" style="left:564.75px;top:764px;font-size:25px;letter-spacing:0.719px;color:#1f1f1f;-webkit-text-stroke:0.2px #1f1f1f;transform:scaleX(1.06);transform-origin:1.25px 0;">Request </span><span class="t" style="left:674.15px;top:764px;font-size:25px;letter-spacing:1.057px;color:#1f1f1f;-webkit-text-stroke:0.2px #1f1f1f;transform:scaleX(1.06);transform-origin:1.25px 0;">Method:</span></span>
<span><span class="t" style="left:564.75px;top:808px;font-size:25px;letter-spacing:0.426px;color:#1f1f1f;-webkit-text-stroke:0.2px #1f1f1f;transform:scaleX(1.06);transform-origin:1.25px 0;">Status C</span><span class="t" style="left:669.95px;top:808px;font-size:25px;letter-spacing:1.224px;color:#1f1f1f;-webkit-text-stroke:0.2px #1f1f1f;transform:scaleX(1.06);transform-origin:1.25px 0;">ode:</span></span>
<span><span class="t" style="left:564.75px;top:852px;font-size:25px;letter-spacing:1.243px;color:#1f1f1f;-webkit-text-stroke:0.2px #1f1f1f;transform:scaleX(1.06);transform-origin:1.25px 0;">Remote </span><span class="t" style="left:670.25px;top:852px;font-size:25px;letter-spacing:0.134px;color:#1f1f1f;-webkit-text-stroke:0.2px #1f1f1f;transform:scaleX(1.06);transform-origin:1.25px 0;">Address:</span></span>
<span><span class="t" style="left:564.75px;top:895px;font-size:25px;letter-spacing:0.754px;color:#1f1f1f;-webkit-text-stroke:0.2px #1f1f1f;transform:scaleX(1.06);transform-origin:1.25px 0;">Referrer </span><span class="t" style="left:673.65px;top:895px;font-size:25px;letter-spacing:0.554px;color:#1f1f1f;-webkit-text-stroke:0.2px #1f1f1f;transform:scaleX(1.06);transform-origin:1.25px 0;">Policy:</span></span>
<span><span class="t" style="left:968.75px;top:720px;font-size:25px;letter-spacing:1.271px;color:#1f1f1f;-webkit-text-stroke:0.2px #1f1f1f;transform:scaleX(1.06);transform-origin:1.25px 0;">http://</span><span class="t" style="left:1043.25px;top:720px;font-size:25px;letter-spacing:1.164px;color:#1f1f1f;-webkit-text-stroke:0.2px #1f1f1f;transform:scaleX(1.06);transform-origin:1.25px 0;">jagile-case-pr2</span><span class="t" style="left:1234.75px;top:720px;font-size:25px;letter-spacing:0.889px;color:#1f1f1f;-webkit-text-stroke:0.2px #1f1f1f;transform:scaleX(1.06);transform-origin:1.25px 0;">.jd.com</span><span class="t" style="left:1324.75px;top:720px;font-size:25px;letter-spacing:0.722px;color:#1f1f1f;-webkit-text-stroke:0.2px #1f1f1f;transform:scaleX(1.06);transform-origin:1.25px 0;">/api/v2</span><span class="t" style="left:1406.25px;top:720px;font-size:25px;letter-spacing:0.998px;color:#1f1f1f;-webkit-text-stroke:0.2px #1f1f1f;transform:scaleX(1.06);transform-origin:1.25px 0;">/review</span><span class="t" style="left:1495.35px;top:720px;font-size:25px;letter-spacing:1.117px;color:#1f1f1f;-webkit-text-stroke:0.2px #1f1f1f;transform:scaleX(1.06);transform-origin:1.25px 0;">/list</span><span class="t" style="left:1538.65px;top:720px;font-size:25px;letter-spacing:0.660px;color:#1f1f1f;-webkit-text-stroke:0.2px #1f1f1f;transform:scaleX(1.06);transform-origin:1.25px 0;">/getCaseReviewList</span></span>
<span class="t" style="left:968.45px;top:764px;font-size:25px;letter-spacing:-0.465px;color:#1f1f1f;-webkit-text-stroke:0.2px #1f1f1f;transform:scaleX(1.06);transform-origin:1.25px 0;">POST</span>
<span class="t" style="left:1003.25px;top:808px;font-size:25px;letter-spacing:1.050px;color:#1f1f1f;-webkit-text-stroke:0.2px #1f1f1f;transform:scaleX(1.06);transform-origin:1.25px 0;">404 Not Found</span>
<span class="t" style="left:968.45px;top:852px;font-size:25px;letter-spacing:0.602px;color:#1f1f1f;-webkit-text-stroke:0.2px #1f1f1f;transform:scaleX(1.06);transform-origin:1.25px 0;">172.20.37.238:80</span>
<span class="t" style="left:968.45px;top:895px;font-size:25px;letter-spacing:1.095px;color:#1f1f1f;-webkit-text-stroke:0.2px #1f1f1f;transform:scaleX(1.06);transform-origin:1.25px 0;">unsafe-url</span>
<span><span class="t" style="left:564.75px;top:969px;font-size:25px;letter-spacing:-1.773px;color:#1f1f1f;-webkit-text-stroke:0.35px #1f1f1f;">▼ Respon</span><span class="t" style="left:670.75px;top:969px;font-size:25px;letter-spacing:0.593px;color:#1f1f1f;-webkit-text-stroke:0.35px #1f1f1f;transform:scaleX(1.06);transform-origin:1.25px 0;">se Headers</span></span>
<span class="t" style="left:930.25px;top:1003px;font-size:25px;letter-spacing:-0.534px;color:#1f1f1f;-webkit-text-stroke:0.2px #1f1f1f;transform:scaleX(1.06);transform-origin:1.25px 0;">Raw</span>
<span><span class="t" style="left:564.75px;top:1060px;font-size:25px;letter-spacing:1.564px;color:#1f1f1f;-webkit-text-stroke:0.2px #1f1f1f;transform:scaleX(1.06);transform-origin:1.25px 0;">Access-</span><span class="t" style="left:669.35px;top:1060px;font-size:25px;letter-spacing:0.884px;color:#1f1f1f;-webkit-text-stroke:0.2px #1f1f1f;transform:scaleX(1.06);transform-origin:1.25px 0;">Control-Allow-</span></span>
<span><span class="t" style="left:564.75px;top:1104px;font-size:25px;letter-spacing:0.865px;color:#1f1f1f;-webkit-text-stroke:0.2px #1f1f1f;transform:scaleX(1.06);transform-origin:1.25px 0;">Credenti</span><span class="t" style="left:671.75px;top:1104px;font-size:25px;letter-spacing:0.266px;color:#1f1f1f;-webkit-text-stroke:0.2px #1f1f1f;transform:scaleX(1.06);transform-origin:1.25px 0;">als:</span></span>
<span><span class="t" style="left:564.75px;top:1148px;font-size:25px;letter-spacing:1.564px;color:#1f1f1f;-webkit-text-stroke:0.2px #1f1f1f;transform:scaleX(1.06);transform-origin:1.25px 0;">Access-</span><span class="t" style="left:669.35px;top:1148px;font-size:25px;letter-spacing:0.884px;color:#1f1f1f;-webkit-text-stroke:0.2px #1f1f1f;transform:scaleX(1.06);transform-origin:1.25px 0;">Control-Allow-</span></span>
<span><span class="t" style="left:564.75px;top:1192px;font-size:25px;letter-spacing:1.040px;color:#1f1f1f;-webkit-text-stroke:0.2px #1f1f1f;transform:scaleX(1.06);transform-origin:1.25px 0;">Headers</span><span class="t" style="left:671.95px;top:1192px;font-size:25px;letter-spacing:-1.103px;color:#1f1f1f;-webkit-text-stroke:0.2px #1f1f1f;">:</span></span>
<span><span class="t" style="left:564.75px;top:1236px;font-size:25px;letter-spacing:1.564px;color:#1f1f1f;-webkit-text-stroke:0.2px #1f1f1f;transform:scaleX(1.06);transform-origin:1.25px 0;">Access-</span><span class="t" style="left:669.35px;top:1236px;font-size:25px;letter-spacing:0.884px;color:#1f1f1f;-webkit-text-stroke:0.2px #1f1f1f;transform:scaleX(1.06);transform-origin:1.25px 0;">Control-Allow-</span></span>
<span><span class="t" style="left:564.75px;top:1280px;font-size:25px;letter-spacing:1.091px;color:#1f1f1f;-webkit-text-stroke:0.2px #1f1f1f;transform:scaleX(1.06);transform-origin:1.25px 0;">Methods</span><span class="t" style="left:673.75px;top:1280px;font-size:25px;letter-spacing:-1.103px;color:#1f1f1f;-webkit-text-stroke:0.2px #1f1f1f;">:</span></span>
<span><span class="t" style="left:564.75px;top:1324px;font-size:25px;letter-spacing:1.564px;color:#1f1f1f;-webkit-text-stroke:0.2px #1f1f1f;transform:scaleX(1.06);transform-origin:1.25px 0;">Access-</span><span class="t" style="left:669.35px;top:1324px;font-size:25px;letter-spacing:0.836px;color:#1f1f1f;-webkit-text-stroke:0.2px #1f1f1f;transform:scaleX(1.06);transform-origin:1.25px 0;">Control-Allow-Origin:</span></span>
<span><span class="t" style="left:564.75px;top:1368px;font-size:25px;letter-spacing:1.395px;color:#1f1f1f;-webkit-text-stroke:0.2px #1f1f1f;transform:scaleX(1.06);transform-origin:1.25px 0;">Connect</span><span class="t" style="left:672.75px;top:1368px;font-size:25px;letter-spacing:-0.172px;color:#1f1f1f;-webkit-text-stroke:0.2px #1f1f1f;transform:scaleX(1.06);transform-origin:1.25px 0;">ion:</span></span>
<span><span class="t" style="left:564.75px;top:1412px;font-size:25px;letter-spacing:1.060px;color:#1f1f1f;-webkit-text-stroke:0.2px #1f1f1f;transform:scaleX(1.06);transform-origin:1.25px 0;">Content-Length:</span></span>
<span class="t" style="left:968.45px;top:1060px;font-size:25px;letter-spacing:1.480px;color:#1f1f1f;-webkit-text-stroke:0.2px #1f1f1f;transform:scaleX(1.06);transform-origin:1.25px 0;">true</span>
<span><span class="t" style="left:968.75px;top:1148px;font-size:25px;letter-spacing:0.649px;color:#1f1f1f;-webkit-text-stroke:0.2px #1f1f1f;transform:scaleX(1.06);transform-origin:1.25px 0;">Origin, </span><span class="t" style="left:1058.55px;top:1148px;font-size:25px;letter-spacing:0.667px;color:#1f1f1f;-webkit-text-stroke:0.2px #1f1f1f;transform:scaleX(1.06);transform-origin:1.25px 0;">X-Requested-With, </span><span class="t" style="left:1304.15px;top:1148px;font-size:25px;letter-spacing:0.836px;color:#1f1f1f;-webkit-text-stroke:0.2px #1f1f1f;transform:scaleX(1.06);transform-origin:1.25px 0;">Content-Type, </span><span class="t" style="left:1489.55px;top:1148px;font-size:25px;letter-spacing:0.787px;color:#1f1f1f;-webkit-text-stroke:0.2px #1f1f1f;transform:scaleX(1.06);transform-origin:1.25px 0;">Accept, </span><span class="t" style="left:1591.65px;top:1148px;font-size:25px;letter-spacing:1.259px;color:#1f1f1f;-webkit-text-stroke:0.2px #1f1f1f;transform:scaleX(1.06);transform-origin:1.25px 0;">Content-</span></span>
<span class="t" style="left:968.45px;top:1192px;font-size:25px;letter-spacing:0.187px;color:#1f1f1f;-webkit-text-stroke:0.2px #1f1f1f;transform:scaleX(1.06);transform-origin:1.25px 0;">Range</span>
<span><span class="t" style="left:968.95px;top:1236px;font-size:25px;letter-spacing:-1.015px;color:#1f1f1f;-webkit-text-stroke:0.2px #1f1f1f;transform:scaleX(1.06);transform-origin:1.25px 0;">GET, </span><span class="t" style="left:1034.15px;top:1236px;font-size:25px;letter-spacing:-0.448px;color:#1f1f1f;-webkit-text-stroke:0.2px #1f1f1f;transform:scaleX(1.06);transform-origin:1.25px 0;">POST, </span><span class="t" style="left:1117.35px;top:1236px;font-size:25px;letter-spacing:-0.223px;color:#1f1f1f;-webkit-text-stroke:0.2px #1f1f1f;transform:scaleX(1.06);transform-origin:1.25px 0;">OPTIONS, </span><span class="t" style="left:1250.65px;top:1236px;font-size:25px;letter-spacing:-0.174px;color:#1f1f1f;-webkit-text-stroke:0.2px #1f1f1f;transform:scaleX(1.06);transform-origin:1.25px 0;">PUT, </span><span class="t" style="left:1316.65px;top:1236px;font-size:25px;letter-spacing:-0.947px;color:#1f1f1f;-webkit-text-stroke:0.2px #1f1f1f;transform:scaleX(1.06);transform-origin:1.25px 0;">DELETE</span></span>
<span class="t" style="left:968.45px;top:1324px;font-size:25px;letter-spacing:1.016px;color:#1f1f1f;-webkit-text-stroke:0.2px #1f1f1f;transform:scaleX(1.06);transform-origin:1.25px 0;">http://local.jd.com:8079</span>
<span class="t" style="left:968.45px;top:1368px;font-size:25px;letter-spacing:1.134px;color:#1f1f1f;-webkit-text-stroke:0.2px #1f1f1f;transform:scaleX(1.06);transform-origin:1.25px 0;">close</span>
<span class="t" style="left:968.45px;top:1412px;font-size:25px;letter-spacing:0.784px;color:#1f1f1f;-webkit-text-stroke:0.2px #1f1f1f;transform:scaleX(1.06);transform-origin:1.25px 0;">140</span></div>
<div id="menu"></div>
<div class="a" style="left:1843px;top:408px;width:9.00px;height:40.50px;background:#dfe8fb;border-radius:6px 0 0 6px;box-shadow:inset 1px -1px 0 #bccdf0, inset 0 1px 0 #cbd8f3;"></div>
<div class="a" style="left:1849.2px;top:421px;width:2.80px;height:15.40px;background:#1a4fc4;"></div>
<div class="a" style="left:308.4px;top:768.2px;width:335.6px;height:2px;background:#cfcfd0"></div>
<div class="a" style="left:308.4px;top:878.3px;width:335.6px;height:2px;background:#cfcfd0"></div>
<div class="a" style="left:308.4px;top:944.3px;width:335.6px;height:2px;background:#cfcfd0"></div>
<div class="a" style="left:308.4px;top:1098.2px;width:335.6px;height:2px;background:#cfcfd0"></div>
<div class="a" style="left:308.4px;top:1208.2px;width:335.6px;height:2px;background:#cfcfd0"></div>
<svg class="a" style="left:627px;top:901px" width="18" height="24" viewBox="0 0 18 24"><path d="M4.4 3.6 L13 12 L4.4 20.4" fill="none" stroke="#232325" stroke-width="3.1" stroke-linecap="round" stroke-linejoin="round"/></svg>
<svg class="a" style="left:627px;top:1121px" width="18" height="24" viewBox="0 0 18 24"><path d="M4.4 3.6 L13 12 L4.4 20.4" fill="none" stroke="#232325" stroke-width="3.1" stroke-linecap="round" stroke-linejoin="round"/></svg>
<svg class="a" style="left:627px;top:1165px" width="18" height="24" viewBox="0 0 18 24"><path d="M4.4 3.6 L13 12 L4.4 20.4" fill="none" stroke="#232325" stroke-width="3.1" stroke-linecap="round" stroke-linejoin="round"/></svg>
<svg class="a" style="left:627px;top:1363px" width="18" height="24" viewBox="0 0 18 24"><path d="M4.4 3.6 L13 12 L4.4 20.4" fill="none" stroke="#232325" stroke-width="3.1" stroke-linecap="round" stroke-linejoin="round"/></svg>
<div class="a" style="left:290px;top:1263.4px;width:372.2px;height:44.2px;background:#5b92f4;border-radius:7px"></div>
<div class="L"><span class="t" style="left:308.00px;top:680px;font-size:26px;letter-spacing:-0.354px;color:#232325;-webkit-text-stroke:0.2px #232325;transform:scaleX(1.06);transform-origin:1.30px 0;">Open in Sources panel</span>
<span class="t" style="left:308.00px;top:724px;font-size:26px;letter-spacing:-0.239px;color:#232325;-webkit-text-stroke:0.2px #232325;transform:scaleX(1.06);transform-origin:1.30px 0;">Open in new tab</span>
<span class="t" style="left:308.00px;top:790px;font-size:26px;letter-spacing:-0.234px;color:#232325;-webkit-text-stroke:0.2px #232325;transform:scaleX(1.06);transform-origin:1.30px 0;">Clear browser cache</span>
<span class="t" style="left:308.00px;top:834px;font-size:26px;letter-spacing:-0.197px;color:#232325;-webkit-text-stroke:0.2px #232325;transform:scaleX(1.06);transform-origin:1.30px 0;">Clear browser cookies</span>
<span class="t" style="left:308.00px;top:900px;font-size:26px;letter-spacing:-0.492px;color:#232325;-webkit-text-stroke:0.2px #232325;transform:scaleX(1.06);transform-origin:1.30px 0;">Copy</span>
<span class="t" style="left:308.00px;top:966px;font-size:26px;letter-spacing:-0.347px;color:#232325;-webkit-text-stroke:0.2px #232325;transform:scaleX(1.06);transform-origin:1.30px 0;">Block request URL</span>
<span class="t" style="left:308.00px;top:1010px;font-size:26px;letter-spacing:-0.152px;color:#232325;-webkit-text-stroke:0.2px #232325;transform:scaleX(1.06);transform-origin:1.30px 0;">Block request domain</span>
<span class="t" style="left:308.00px;top:1054px;font-size:26px;letter-spacing:-1.034px;color:#232325;-webkit-text-stroke:0.2px #232325;transform:scaleX(1.06);transform-origin:1.30px 0;">Replay XHR</span>
<span class="t" style="left:308.00px;top:1120px;font-size:26px;letter-spacing:-0.233px;color:#232325;-webkit-text-stroke:0.2px #232325;transform:scaleX(1.06);transform-origin:1.30px 0;">Sort By</span>
<span class="t" style="left:308.00px;top:1164px;font-size:26px;letter-spacing:-0.207px;color:#232325;-webkit-text-stroke:0.2px #232325;transform:scaleX(1.06);transform-origin:1.30px 0;">Header Options</span>
<span class="t" style="left:308.00px;top:1230px;font-size:26px;letter-spacing:-0.243px;color:#232325;-webkit-text-stroke:0.2px #232325;transform:scaleX(1.06);transform-origin:1.30px 0;">Override headers</span>
<span class="t" style="left:308.00px;top:1318px;font-size:26px;letter-spacing:-0.305px;color:#232325;-webkit-text-stroke:0.2px #232325;transform:scaleX(1.06);transform-origin:1.30px 0;">Show all overrides</span>
<span class="t" style="left:308.00px;top:1362px;font-size:26px;letter-spacing:0.024px;color:#232325;-webkit-text-stroke:0.2px #232325;">服务</span>
<span class="t" style="left:308.00px;top:1273px;font-size:26px;letter-spacing:0.027px;color:#ffffff;-webkit-text-stroke:0.2px #ffffff;transform:scaleX(1.06);transform-origin:1.30px 0;">Override content</span></div>
<div class="a" style="left:11.2px;top:641.4px;width:318.6px;height:39px;border:7.4px solid #cf3526;border-radius:5px"></div>
<div class="a" style="left:287.4px;top:1261px;width:325px;height:37px;border:7.8px solid #cf3526;border-radius:5px"></div>
<svg class="a" style="left:0;top:0" width="1852" height="1450" viewBox="0 0 1852 1450"><path d="M191 721 L275.5 1206" stroke="#cf3526" stroke-width="8.8" fill="none"/><path d="M259.8 1204.7 L291 1198.7 L282.3 1239.5 Z" fill="#cf3526"/></svg>
<div class="L"><span class="t" style="left:1480.00px;top:1389px;font-size:24px;letter-spacing:0.704px;color:#ffffff;text-shadow:1.1px 1.1px 1px rgba(0,0,0,0.72),0 0 1.5px rgba(0,0,0,0.3);">掘金技术社区 @ 京东云开发者</span></div>
</body></html>
